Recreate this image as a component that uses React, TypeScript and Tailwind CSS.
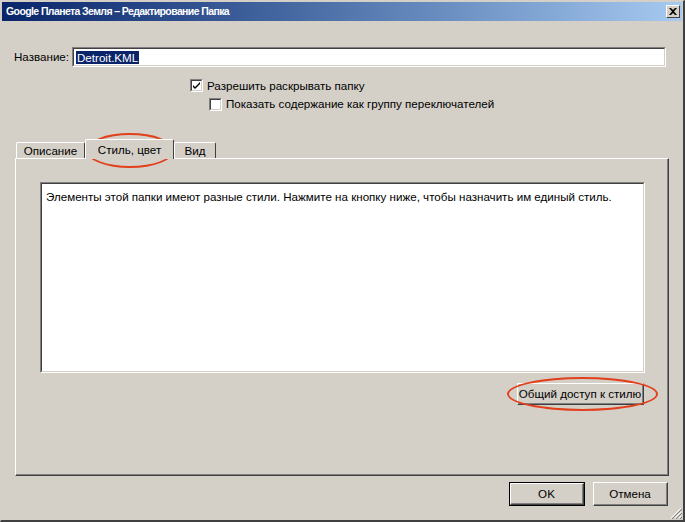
import React from 'react';

const font = { fontFamily: '"Liberation Sans", "DejaVu Sans", sans-serif' };

const Checkbox = ({ checked }: { checked?: boolean }) => (
  <span className="inline-flex h-[13px] w-[13px] shrink-0 items-center justify-center border-t border-l border-t-[#808080] border-l-[#808080] border-r border-b border-r-white border-b-white">
    <span className="flex h-[11px] w-[11px] items-center justify-center border-t border-l border-t-[#404040] border-l-[#404040] border-r border-b border-r-[#d4d0c8] border-b-[#d4d0c8] bg-white">
      {checked && (
        <svg width="9" height="9" viewBox="0 0 9 9">
          <path d="M1 4 L3 6 L8 1 L8 3 L3 8 L1 6 Z" fill="#000" />
        </svg>
      )}
    </span>
  </span>
);

const Button = ({ label, def, className }: { label: string; def?: boolean; className?: string }) => (
  <div className={`${def ? 'border border-black' : ''} ${className || ''}`}>
    <div className="h-full border-t border-l border-t-white border-l-white border-r border-b border-r-[#404040] border-b-[#404040]">
      <div className="flex h-full items-center justify-center border-r border-b border-r-[#808080] border-b-[#808080] text-[11.6px] text-black">
        {label}
      </div>
    </div>
  </div>
);

export default function App() {
  return (
    <div
      className="relative flex h-[522px] w-[685px] flex-col overflow-hidden border-t border-l border-t-[#d4d0c8] border-l-[#d4d0c8] border-r-2 border-b-2 border-r-[#404040] border-b-[#404040] bg-[#d4d0c8]"
      style={font}
    >
      {/* title bar */}
      <div className="ml-[1px] mr-[1px] mt-[1px] flex h-[19px] items-center justify-between bg-gradient-to-r from-[#0a246a] to-[#a6caf0] pl-[4px] pr-[2px]">
        <span className="text-[10.5px] font-bold tracking-[-0.6px] text-white">Google Планета Земля – Редактирование Папка</span>
        <div className="flex h-[13px] w-[14px] items-center justify-center border-t border-l border-t-white border-l-white border-r border-b border-r-[#404040] border-b-[#404040] bg-[#d4d0c8]">
          <svg width="8" height="7" viewBox="0 0 8 7">
            <path d="M0 0 L2 0 L4 2 L6 0 L8 0 L5 3.5 L8 7 L6 7 L4 5 L2 7 L0 7 L3 3.5 Z" fill="#000" />
          </svg>
        </div>
      </div>

      {/* name row */}
      <div className="mt-[26px] flex items-center pl-[13px] pr-[17px]">
        <span className="w-[58px] text-[11.6px] text-black">Название:</span>
        <div className="flex h-[20px] flex-1 items-center border-t border-l border-t-[#808080] border-l-[#808080] border-r border-b border-r-white border-b-white">
          <div className="flex h-full flex-1 items-center border-t border-l border-t-[#404040] border-l-[#404040] border-r border-b border-r-[#d4d0c8] border-b-[#d4d0c8] bg-white pl-[2px]">
            <span className="bg-[#0a246a] px-[1px] text-[11.6px] leading-[13px] text-white">Detroit.KML</span>
          </div>
        </div>
      </div>

      {/* checkboxes */}
      <div className="mt-[10px] flex items-center gap-[4px] pl-[189px]">
        <Checkbox checked />
        <span className="text-[11.6px] text-black">Разрешить раскрывать папку</span>
      </div>
      <div className="mt-[1px] flex items-center gap-[4px] pl-[208px]">
        <Checkbox />
        <span className="text-[11.6px] text-black">Показать содержание как группу переключателей</span>
      </div>

      {/* tabs */}
      <div className="mt-[26px] flex items-end pl-[15px] pr-[14px]">
        <div className="flex h-[16px] w-[69px] items-center justify-center rounded-t-[2px] border-t border-l border-t-white border-l-white border-r border-r-[#404040] text-[11.6px] text-black">
          Описание
        </div>
        <div className="relative z-10 -mb-[1px] flex h-[20px] w-[89px] items-center justify-center rounded-t-[2px] border-t border-l border-t-white border-l-white border-r border-r-[#404040] bg-[#d4d0c8] text-[11.6px] text-black">
          Стиль, цвет
        </div>
        <div className="flex h-[16px] w-[42px] items-center justify-center rounded-t-[2px] border-t border-l border-t-white border-l-white border-r border-r-[#404040] text-[11.6px] text-black">
          Вид
        </div>
      </div>
      <div className="mx-[14px] flex h-[318px] flex-col border-t border-l border-t-white border-l-white border-r border-b border-r-[#404040] border-b-[#404040]">
        <div className="flex flex-1 flex-col border-r border-b border-r-[#808080] border-b-[#808080] pl-[24px] pr-[22px] pt-[23px]">
          <div className="h-[191px] border-t border-l border-t-[#808080] border-l-[#808080] border-r border-b border-r-white border-b-white">
            <div className="h-full border-t border-l border-t-[#404040] border-l-[#404040] border-r border-b border-r-[#d4d0c8] border-b-[#d4d0c8] bg-white px-[4px] pt-[4px] text-[11.6px] text-black">
              Элементы этой папки имеют разные стили. Нажмите на кнопку ниже, чтобы назначить им единый стиль.
            </div>
          </div>
          <div className="mt-[10px] flex justify-end pr-[1px]">
            <Button label="Общий доступ к стилю" className="h-[22px] w-[127px]" />
          </div>
        </div>
      </div>

      {/* bottom buttons */}
      <div className="mt-[6px] flex justify-end gap-[8px] pr-[15px]">
        <Button label="OK" def className="h-[24px] w-[76px]" />
        <Button label="Отмена" className="h-[24px] w-[75px]" />
      </div>

      {/* resize grip */}
      <svg className="absolute bottom-[1px] right-[1px]" width="12" height="12" viewBox="0 0 12 12">
        <path d="M11 1 L1 11 M11 5 L5 11 M11 9 L9 11" stroke="#fff" strokeWidth="1" />
        <path d="M12 2 L2 12 M12 6 L6 12 M12 10 L10 12" stroke="#808080" strokeWidth="1" />
      </svg>

      {/* red annotation ellipses */}
      <div className="pointer-events-none absolute left-[85px] top-[132px] h-[35px] w-[88px] rounded-[50%] border-2 border-[#e2401c]" />
      <div className="pointer-events-none absolute left-[506px] top-[376px] h-[34px] w-[151px] rounded-[50%] border-2 border-[#e2401c]" />
    </div>
  );
}
